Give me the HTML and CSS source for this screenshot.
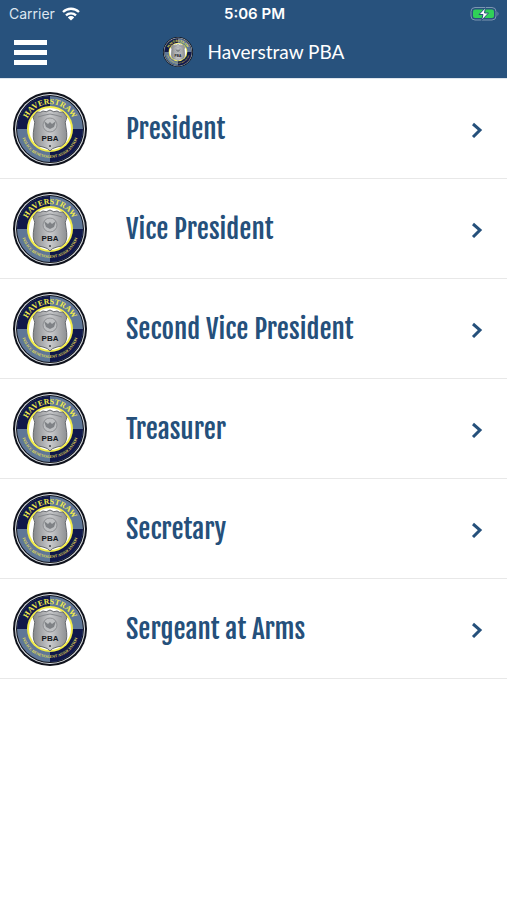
FILE: index.html
```
<!DOCTYPE html>
<html lang="en">
<head>
  <meta charset="UTF-8" />
  <meta name="viewport" content="width=device-width, initial-scale=1.0"/>
  <title>Haverstraw PBA</title>
  <link rel="stylesheet" href="styles.css">
</head>
<body>

  <!-- Shared shapes -->
  <svg class="sprite" aria-hidden="true">
    <linearGradient id="silver" x2="1">
      <stop offset="0" stop-color="#85878a"/>
      <stop offset="0.5" stop-color="#c9cacc"/>
      <stop offset="1" stop-color="#8d8f92"/>
    </linearGradient>
    <symbol id="seal" viewBox="0 0 74 74">
      <circle cx="37" cy="37" r="37" fill="#10131c"/>
      <circle cx="37" cy="37" r="35" fill="#e4e8ee"/>
      <circle cx="37" cy="37" r="34" fill="#10131c"/>
      <circle cx="37" cy="37" r="33" fill="#5f7797"/>
      <path d="M37 37V4A33 33 0 0 0 4 37zM37 37v33a33 33 0 0 0 33-33z" fill="#10184a"/>
      <circle cx="37" cy="37" r="23" fill="#f2ec4a"/>
      <circle cx="37" cy="37" r="21" fill="#fff"/>
      <path id="arcTop" d="M12 37a25 25 0 0 1 50 0" fill="none"/>
      <path id="arcBottom" d="M8 37a29 29 0 0 0 58 0" fill="none"/>
      <text class="seal-name"><textPath href="#arcTop" startOffset="50%">HAVERSTRAW</textPath></text>
      <text class="seal-motto"><textPath href="#arcBottom" startOffset="50%">POLICE BENEVOLENT ASSOCIATION</textPath></text>
      <path d="M24 20q4 1 6-1 3 2 7-1 4 3 7 1 2 2 6 1l4 5q-3 5-1 11 2 10-1 15-3 4-8 4-5 1-7 4-2-3-7-4-5 0-8-4-3-5-1-15 2-6-1-11z" fill="url(#silver)" stroke="#66696d"/>
      <path d="M25 25q6-2 12-3 6 1 12 3" fill="none" stroke="#85888c"/>
      <circle cx="37" cy="33" r="7" fill="#bfc1c3" stroke="#8d8f92"/>
      <path d="M31 29l4 3 2-2 2 2 4-3-2 6-4 2-4-2z" fill="#7f8286"/>
      <text class="seal-pba" x="37" y="49">PBA</text>
      <circle cx="37" cy="54" r="1" fill="#3d4044"/>
    </symbol>
    <symbol id="chevron" viewBox="0 0 12 18">
      <path d="M2 4l7 6-7 7" fill="none" stroke="#25507b" stroke-width="3"/>
    </symbol>
  </svg>

  <header class="header">
    <div class="status-bar">
      <div class="carrier">
        <span>Carrier</span>
        <svg class="wifi" viewBox="0 0 18 14" aria-hidden="true">
          <path d="M1 5a11.500 11.500 0 0 1 16 0M4 8.300a7.200 7.200 0 0 1 10 0" fill="none" stroke="#fff" stroke-width="2.300"/>
          <path d="M5.800 10.400a4.600 4.600 0 0 1 6.400 0L9 13.600z" fill="#fff"/>
        </svg>
      </div>
      <div class="time">5:06 PM</div>
      <svg class="battery" viewBox="0 0 30 16" aria-hidden="true">
        <rect x="1" y="1.500" width="25" height="12.500" rx="4" fill="none" stroke="#7d95b2"/>
        <path d="M27.500 5.500v4.500q2-2.200 0-4.500z" fill="#7d95b2"/>
        <rect x="3" y="3.500" width="21" height="8.500" rx="2" fill="#30d158"/>
        <path d="M15.500 1.500L9 8.500h4l-1.500 6L18.500 7H14.500z" fill="#fff" stroke="#28527d"/>
      </svg>
    </div>
    <div class="nav-bar">
      <button class="menu-button" type="button" aria-label="Menu">
        <span></span>
        <span></span>
        <span></span>
      </button>
      <div class="brand">
        <svg class="brand-logo" aria-hidden="true"><use href="#seal"/></svg>
        <h1>Haverstraw PBA</h1>
      </div>
    </div>
  </header>

  <main>
    <ul class="board-list">
      <li>
        <a class="board-item" href="#president">
          <svg class="seal" aria-hidden="true"><use href="#seal"/></svg>
          <span class="board-title">President</span>
          <svg class="chevron" aria-hidden="true"><use href="#chevron"/></svg>
        </a>
      </li>
      <li>
        <a class="board-item" href="#vice-president">
          <svg class="seal" aria-hidden="true"><use href="#seal"/></svg>
          <span class="board-title">Vice President</span>
          <svg class="chevron" aria-hidden="true"><use href="#chevron"/></svg>
        </a>
      </li>
      <li>
        <a class="board-item" href="#second-vice-president">
          <svg class="seal" aria-hidden="true"><use href="#seal"/></svg>
          <span class="board-title">Second Vice President</span>
          <svg class="chevron" aria-hidden="true"><use href="#chevron"/></svg>
        </a>
      </li>
      <li>
        <a class="board-item" href="#treasurer">
          <svg class="seal" aria-hidden="true"><use href="#seal"/></svg>
          <span class="board-title">Treasurer</span>
          <svg class="chevron" aria-hidden="true"><use href="#chevron"/></svg>
        </a>
      </li>
      <li>
        <a class="board-item" href="#secretary">
          <svg class="seal" aria-hidden="true"><use href="#seal"/></svg>
          <span class="board-title">Secretary</span>
          <svg class="chevron" aria-hidden="true"><use href="#chevron"/></svg>
        </a>
      </li>
      <li>
        <a class="board-item" href="#sergeant-at-arms">
          <svg class="seal" aria-hidden="true"><use href="#seal"/></svg>
          <span class="board-title">Sergeant at Arms</span>
          <svg class="chevron" aria-hidden="true"><use href="#chevron"/></svg>
        </a>
      </li>
    </ul>
  </main>

</body>
</html>
```
FILE: styles.css
```
* {
  box-sizing: border-box;
}

body {
  margin: 0;
  background-color: #fff;
  font-family: Inter, "Liberation Sans", sans-serif;
}

.sprite {
  display: block;
  width: 0;
  height: 0;
  visibility: hidden;
}

/* Header */
.header {
  background-color: #28527d;
  border-bottom: 1px solid #dfe5ec;
  color: white;
}

.status-bar {
  display: grid;
  grid-template-columns: 1fr auto 1fr;
  align-items: center;
  height: 27px;
  padding: 0 7px 0 9px;
}

.carrier {
  display: flex;
  align-items: center;
  gap: 7px;
  font-size: 14px;
  color: #dde6f0;
}

.wifi {
  width: 18px;
  height: 14px;
}

.time {
  font-size: 15px;
  font-weight: 600;
}

.battery {
  width: 30px;
  height: 16px;
  justify-self: end;
}

.nav-bar {
  display: grid;
  grid-template-columns: 1fr auto 1fr;
  align-items: center;
  height: 51px;
  padding: 0 14px;
}

.menu-button {
  display: flex;
  flex-direction: column;
  gap: 5px;
  width: 33px;
  padding: 0;
  border: none;
  background: none;
  cursor: pointer;
}

.menu-button span {
  height: 5px;
  background-color: white;
}

.brand {
  display: flex;
  align-items: center;
  gap: 15px;
  padding-bottom: 2px;
}

.brand-logo {
  width: 30px;
  height: 30px;
}

h1 {
  margin: 0;
  font-family: Lato, sans-serif;
  font-size: 19px;
  font-weight: 400;
}

/* Board list */
.board-list {
  margin: 0;
  padding: 0;
  list-style: none;
}

.board-item {
  display: flex;
  align-items: center;
  height: 100px;
  padding: 1px 24px 0 13px;
  border-bottom: 1px solid #e8e8e8;
  color: #25507b;
  text-decoration: none;
}

.seal {
  flex: none;
  width: 74px;
  height: 74px;
}

.board-title {
  flex: 1;
  margin-left: 39px;
  font-family: "Fjalla One", "Liberation Sans Narrow", "Liberation Sans", sans-serif;
  font-size: 27px;
  font-weight: 400;
}

.chevron {
  width: 12px;
  height: 18px;
}

/* Lettering on the seal */
.seal-name {
  font-family: "Liberation Serif", serif;
  font-size: 8px;
  font-weight: 700;
  fill: #f2ec4a;
  text-anchor: middle;
}

.seal-motto {
  font-family: "Liberation Serif", serif;
  font-size: 4px;
  font-weight: 700;
  fill: #e3df55;
  text-anchor: middle;
}

.seal-pba {
  font-family: "Liberation Sans", sans-serif;
  font-size: 8px;
  font-weight: 700;
  fill: #15171c;
  text-anchor: middle;
}
```
